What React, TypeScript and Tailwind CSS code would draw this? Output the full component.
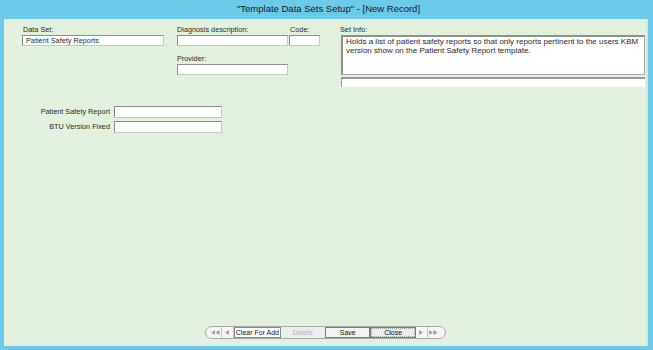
const font = { fontFamily: '"Liberation Sans", Arial, sans-serif' };

const Field = ({ className = "" }: { className?: string }) => (
  <div
    className={`bg-white border border-[#c8c8c8] border-t-[#8e8e8e] border-l-[#8e8e8e] ${className}`}
  />
);

const Tri = ({ dir, double }: { dir: "l" | "r"; double?: boolean }) => {
  const one = dir === "l" ? "M4 0 L4 5 L0 2.5 Z" : "M0 0 L0 5 L4 2.5 Z";
  return (
    <svg width={double ? 9 : 5} height="5" viewBox={double ? "0 0 9 5" : "0 0 5 5"}>
      <path d={one} fill="#a0a0a0" />
      {double && <path d={one} transform="translate(4.5 0)" fill="#a0a0a0" />}
    </svg>
  );
};

export default function App() {
  return (
    <div className="w-[653px] h-[350px] bg-[#6ccbea] flex flex-col overflow-hidden" style={font}>
      {/* title bar */}
      <div className="h-[19px] flex items-center justify-center text-[9.5px] text-[#1a1a1a] pl-[4px]">
        "Template Data Sets Setup" - [New Record]
      </div>

      {/* form body */}
      <div className="flex-1 ml-[4px] mr-[5px] mb-[4px] bg-[#e2f1de] border-r-2 border-[#d5e8d2] flex flex-col text-[7.3px] text-[#2b2b2b]">
        <div className="flex pt-[6px]">
          <div className="ml-[18px] w-[142px]">
            <div className="h-[9px] leading-[9px] pl-[1px]">Data Set:</div>
            <div className="mt-[1px] h-[11px] bg-white border border-[#c8c8c8] border-t-[#8e8e8e] border-l-[#8e8e8e] leading-[9px] pl-[3px]">
              Patient Safety Reports
            </div>
          </div>

          <div className="ml-[13px] w-[111px]">
            <div className="h-[9px] leading-[9px]">Diagnosis description:</div>
            <Field className="mt-[1px] h-[11px]" />
            <div className="mt-[8px] h-[9px] leading-[9px]">Provider:</div>
            <Field className="mt-[1px] h-[11px]" />
          </div>

          <div className="ml-[1px] w-[31px]">
            <div className="h-[9px] leading-[9px] pl-[1px]">Code:</div>
            <Field className="mt-[1px] h-[11px]" />
          </div>

          <div className="ml-[21px] w-[304px]">
            <div className="h-[9px] leading-[9px] -ml-[1px]">Set Info:</div>
            <div className="mt-[1px] h-[40px] bg-white border border-[#a8a8a8] border-t-2 border-l-2 border-t-[#8e8e8e] border-l-[#8e8e8e] px-[3px] pt-[1px] leading-[8.5px] text-[8px] text-[#2a2a2a]">
              Holds a list of patient safety reports so that only reports pertinent to the users KBM version show on the Patient Safety Report template.
            </div>
            <div className="mt-[2px] h-[10px] bg-white border-t-2 border-l border-[#9a9a9a]" />
          </div>
        </div>

        <div className="mt-[19px] flex flex-col gap-[3px]">
          <div className="flex items-center">
            <div className="w-[106px] text-right">Patient Safety Report</div>
            <Field className="ml-[4px] w-[108px] h-[12px]" />
          </div>
          <div className="flex items-center">
            <div className="w-[106px] text-right">BTU Version Fixed</div>
            <Field className="ml-[4px] w-[108px] h-[12px]" />
          </div>
        </div>

        <div className="flex-1" />

        {/* navigation bar */}
        <div className="flex justify-center mb-[7px]">
          <div className="h-[13px] w-[241px] flex items-stretch rounded-full border border-[#a9a9a9] bg-[#f4f4f4] px-[5px] text-[7px] leading-[7px] whitespace-nowrap">
            <div className="w-[12px] flex items-center justify-center border-r border-[#c4c4c4]">
              <Tri dir="l" double />
            </div>
            <div className="w-[12px] flex items-center justify-center border-r border-[#c4c4c4]">
              <Tri dir="l" />
            </div>
            <div className="w-[47px] flex items-center justify-center bg-white border border-[#8a8a8a] text-[#111]">
              Clear For Add
            </div>
            <div className="w-[45px] flex items-center justify-center bg-[#ececec] text-[#b3b3b3]">
              Delete
            </div>
            <div className="w-[46px] flex items-center justify-center bg-[#f3f3f3] border border-[#7c7c7c] text-[#111]">
              Save
            </div>
            <div className="w-[46px] flex border border-[#7c7c7c] bg-[#ececec]">
              <div className="flex-1 flex items-center justify-center border border-dotted border-[#a0a0a0] text-[#111]">
                Close
              </div>
            </div>
            <div className="w-[12px] flex items-center justify-center border-r border-[#c4c4c4]">
              <Tri dir="r" />
            </div>
            <div className="w-[12px] flex items-center justify-center">
              <Tri dir="r" double />
            </div>
          </div>
        </div>
      </div>
    </div>
  );
}
